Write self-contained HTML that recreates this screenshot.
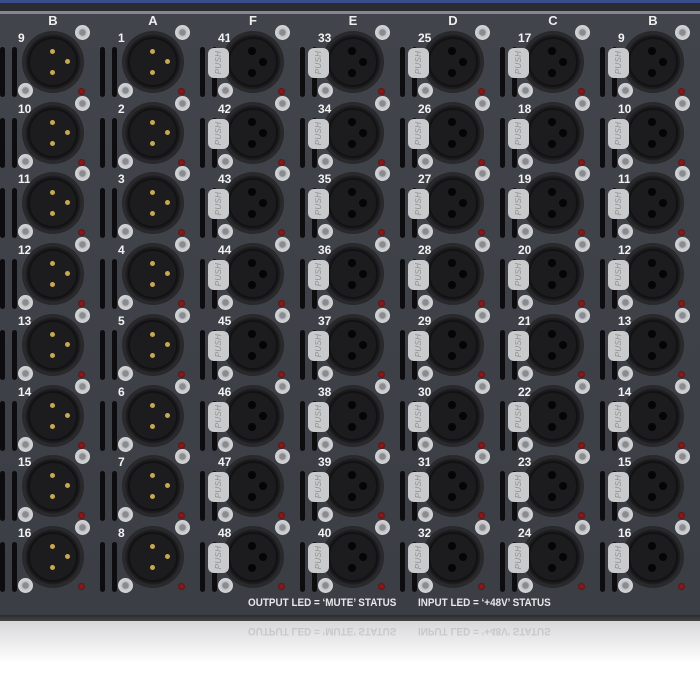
<!DOCTYPE html>
<html><head><meta charset="utf-8"><style>
*{margin:0;padding:0;box-sizing:border-box}
body{width:700px;height:700px;overflow:hidden;background:#fff;font-family:"Liberation Sans",sans-serif;position:relative}
.top1{position:absolute;left:0;top:0;width:700px;height:3px;background:#3b4e8c}
.top2{position:absolute;left:0;top:3px;width:700px;height:8px;background:#2a2c31}
.top3{position:absolute;left:0;top:11px;width:700px;height:3px;background:#85878c}
.panel{position:absolute;left:0;top:14px;width:700px;height:603px;background:linear-gradient(#41444b,#3b3e45)}
.lip{position:absolute;left:0;top:615px;width:700px;height:6px;background:linear-gradient(#2a2b2f,#444)}
.refl{position:absolute;left:0;top:621px;width:700px;height:60px;background:linear-gradient(#d8d8da,#fff 70%)}
.L{position:absolute;top:13px;width:20px;margin-left:-10px;text-align:center;color:#eee;font-weight:bold;font-size:13px}
.c{position:absolute;width:100px;height:71px}
.c i,.c span{position:absolute;display:block}
.sl{left:-3px;top:20px;width:5px;height:50px;background:#0d0d0f;border-radius:3px}
.sl.r{left:9px}
.n{left:15px;top:4px;color:#f2f2f2;font-weight:bold;font-size:12px}
.o{left:19px;top:4px;width:62px;height:62px;border-radius:50%;background:radial-gradient(circle,#1b1b1d 60%,#2a2a2d 64%,#232325 90%,#505258 100%)}
.in{left:6px;top:6px;width:50px;height:50px;border-radius:50%;background:#1c1c1e;border:2px solid #121214}
.pn{width:5px;height:5px;border-radius:50%;background:#c8a850}
.pn.a{left:20px;top:10px}.pn.b{left:35px;top:20px}.pn.d{left:20px;top:31px}
.h{width:8px;height:8px;border-radius:50%;background:#050505}
.h.a{left:18px;top:8px}.h.b{left:29px;top:19px}.h.d{left:18px;top:30px}
.sc{width:15px;height:15px;border-radius:50%;background:radial-gradient(circle,#8a8b8f 25%,#c4c5c8 38%,#d8d9db 72%,#7a7a7e 100%)}
.sc.t{left:72px;top:-2px}.sc.bl{left:15px;top:56px}
.led{left:75px;top:61px;width:7px;height:7px;border-radius:50%;background:radial-gradient(circle,#8a1a1a 30%,#3a0c0c 100%)}
.tab{left:5px;top:21px;width:21px;height:30px;border-radius:6px;background:#c9cacc;z-index:2}
.tab span{left:-5px;top:10px;width:31px;font-size:8px;color:#8e8f92;text-align:center;transform:rotate(-90deg);letter-spacing:.3px}
.bt{position:absolute;top:597px;color:#e8e8ea;font-weight:bold;font-size:11px;transform:scaleX(.9);transform-origin:left}
.rt{position:absolute;top:625px;color:#aaa;font-weight:bold;font-size:11px;transform:scale(.9,-1);transform-origin:left center;opacity:.45}
</style></head><body>
<div class="top1"></div><div class="top2"></div><div class="top3"></div>
<div class="panel"></div>
<div class="L" style="left:53px">B</div><div class="L" style="left:153px">A</div><div class="L" style="left:253px">F</div><div class="L" style="left:353px">E</div><div class="L" style="left:453px">D</div><div class="L" style="left:553px">C</div><div class="L" style="left:653px">B</div>

<div class="c" style="left:3px;top:27px"><i class="sl"></i><i class="sl r"></i><span class="n">9</span><i class="o"><i class="in"><i class="pn a"></i><i class="pn b"></i><i class="pn d"></i></i></i><i class="sc t"></i><i class="sc bl"></i><i class="led"></i></div>
<div class="c" style="left:3px;top:98px"><i class="sl"></i><i class="sl r"></i><span class="n">10</span><i class="o"><i class="in"><i class="pn a"></i><i class="pn b"></i><i class="pn d"></i></i></i><i class="sc t"></i><i class="sc bl"></i><i class="led"></i></div>
<div class="c" style="left:3px;top:168px"><i class="sl"></i><i class="sl r"></i><span class="n">11</span><i class="o"><i class="in"><i class="pn a"></i><i class="pn b"></i><i class="pn d"></i></i></i><i class="sc t"></i><i class="sc bl"></i><i class="led"></i></div>
<div class="c" style="left:3px;top:239px"><i class="sl"></i><i class="sl r"></i><span class="n">12</span><i class="o"><i class="in"><i class="pn a"></i><i class="pn b"></i><i class="pn d"></i></i></i><i class="sc t"></i><i class="sc bl"></i><i class="led"></i></div>
<div class="c" style="left:3px;top:310px"><i class="sl"></i><i class="sl r"></i><span class="n">13</span><i class="o"><i class="in"><i class="pn a"></i><i class="pn b"></i><i class="pn d"></i></i></i><i class="sc t"></i><i class="sc bl"></i><i class="led"></i></div>
<div class="c" style="left:3px;top:381px"><i class="sl"></i><i class="sl r"></i><span class="n">14</span><i class="o"><i class="in"><i class="pn a"></i><i class="pn b"></i><i class="pn d"></i></i></i><i class="sc t"></i><i class="sc bl"></i><i class="led"></i></div>
<div class="c" style="left:3px;top:451px"><i class="sl"></i><i class="sl r"></i><span class="n">15</span><i class="o"><i class="in"><i class="pn a"></i><i class="pn b"></i><i class="pn d"></i></i></i><i class="sc t"></i><i class="sc bl"></i><i class="led"></i></div>
<div class="c" style="left:3px;top:522px"><i class="sl"></i><i class="sl r"></i><span class="n">16</span><i class="o"><i class="in"><i class="pn a"></i><i class="pn b"></i><i class="pn d"></i></i></i><i class="sc t"></i><i class="sc bl"></i><i class="led"></i></div>
<div class="c" style="left:103px;top:27px"><i class="sl"></i><i class="sl r"></i><span class="n">1</span><i class="o"><i class="in"><i class="pn a"></i><i class="pn b"></i><i class="pn d"></i></i></i><i class="sc t"></i><i class="sc bl"></i><i class="led"></i></div>
<div class="c" style="left:103px;top:98px"><i class="sl"></i><i class="sl r"></i><span class="n">2</span><i class="o"><i class="in"><i class="pn a"></i><i class="pn b"></i><i class="pn d"></i></i></i><i class="sc t"></i><i class="sc bl"></i><i class="led"></i></div>
<div class="c" style="left:103px;top:168px"><i class="sl"></i><i class="sl r"></i><span class="n">3</span><i class="o"><i class="in"><i class="pn a"></i><i class="pn b"></i><i class="pn d"></i></i></i><i class="sc t"></i><i class="sc bl"></i><i class="led"></i></div>
<div class="c" style="left:103px;top:239px"><i class="sl"></i><i class="sl r"></i><span class="n">4</span><i class="o"><i class="in"><i class="pn a"></i><i class="pn b"></i><i class="pn d"></i></i></i><i class="sc t"></i><i class="sc bl"></i><i class="led"></i></div>
<div class="c" style="left:103px;top:310px"><i class="sl"></i><i class="sl r"></i><span class="n">5</span><i class="o"><i class="in"><i class="pn a"></i><i class="pn b"></i><i class="pn d"></i></i></i><i class="sc t"></i><i class="sc bl"></i><i class="led"></i></div>
<div class="c" style="left:103px;top:381px"><i class="sl"></i><i class="sl r"></i><span class="n">6</span><i class="o"><i class="in"><i class="pn a"></i><i class="pn b"></i><i class="pn d"></i></i></i><i class="sc t"></i><i class="sc bl"></i><i class="led"></i></div>
<div class="c" style="left:103px;top:451px"><i class="sl"></i><i class="sl r"></i><span class="n">7</span><i class="o"><i class="in"><i class="pn a"></i><i class="pn b"></i><i class="pn d"></i></i></i><i class="sc t"></i><i class="sc bl"></i><i class="led"></i></div>
<div class="c" style="left:103px;top:522px"><i class="sl"></i><i class="sl r"></i><span class="n">8</span><i class="o"><i class="in"><i class="pn a"></i><i class="pn b"></i><i class="pn d"></i></i></i><i class="sc t"></i><i class="sc bl"></i><i class="led"></i></div>
<div class="c" style="left:203px;top:27px"><i class="sl"></i><i class="sl r"></i><span class="n">41</span><i class="o"><i class="in"><i class="h a"></i><i class="h b"></i><i class="h d"></i></i></i><i class="tab"><span>PUSH</span></i><i class="sc t"></i><i class="sc bl"></i><i class="led"></i></div>
<div class="c" style="left:203px;top:98px"><i class="sl"></i><i class="sl r"></i><span class="n">42</span><i class="o"><i class="in"><i class="h a"></i><i class="h b"></i><i class="h d"></i></i></i><i class="tab"><span>PUSH</span></i><i class="sc t"></i><i class="sc bl"></i><i class="led"></i></div>
<div class="c" style="left:203px;top:168px"><i class="sl"></i><i class="sl r"></i><span class="n">43</span><i class="o"><i class="in"><i class="h a"></i><i class="h b"></i><i class="h d"></i></i></i><i class="tab"><span>PUSH</span></i><i class="sc t"></i><i class="sc bl"></i><i class="led"></i></div>
<div class="c" style="left:203px;top:239px"><i class="sl"></i><i class="sl r"></i><span class="n">44</span><i class="o"><i class="in"><i class="h a"></i><i class="h b"></i><i class="h d"></i></i></i><i class="tab"><span>PUSH</span></i><i class="sc t"></i><i class="sc bl"></i><i class="led"></i></div>
<div class="c" style="left:203px;top:310px"><i class="sl"></i><i class="sl r"></i><span class="n">45</span><i class="o"><i class="in"><i class="h a"></i><i class="h b"></i><i class="h d"></i></i></i><i class="tab"><span>PUSH</span></i><i class="sc t"></i><i class="sc bl"></i><i class="led"></i></div>
<div class="c" style="left:203px;top:381px"><i class="sl"></i><i class="sl r"></i><span class="n">46</span><i class="o"><i class="in"><i class="h a"></i><i class="h b"></i><i class="h d"></i></i></i><i class="tab"><span>PUSH</span></i><i class="sc t"></i><i class="sc bl"></i><i class="led"></i></div>
<div class="c" style="left:203px;top:451px"><i class="sl"></i><i class="sl r"></i><span class="n">47</span><i class="o"><i class="in"><i class="h a"></i><i class="h b"></i><i class="h d"></i></i></i><i class="tab"><span>PUSH</span></i><i class="sc t"></i><i class="sc bl"></i><i class="led"></i></div>
<div class="c" style="left:203px;top:522px"><i class="sl"></i><i class="sl r"></i><span class="n">48</span><i class="o"><i class="in"><i class="h a"></i><i class="h b"></i><i class="h d"></i></i></i><i class="tab"><span>PUSH</span></i><i class="sc t"></i><i class="sc bl"></i><i class="led"></i></div>
<div class="c" style="left:303px;top:27px"><i class="sl"></i><i class="sl r"></i><span class="n">33</span><i class="o"><i class="in"><i class="h a"></i><i class="h b"></i><i class="h d"></i></i></i><i class="tab"><span>PUSH</span></i><i class="sc t"></i><i class="sc bl"></i><i class="led"></i></div>
<div class="c" style="left:303px;top:98px"><i class="sl"></i><i class="sl r"></i><span class="n">34</span><i class="o"><i class="in"><i class="h a"></i><i class="h b"></i><i class="h d"></i></i></i><i class="tab"><span>PUSH</span></i><i class="sc t"></i><i class="sc bl"></i><i class="led"></i></div>
<div class="c" style="left:303px;top:168px"><i class="sl"></i><i class="sl r"></i><span class="n">35</span><i class="o"><i class="in"><i class="h a"></i><i class="h b"></i><i class="h d"></i></i></i><i class="tab"><span>PUSH</span></i><i class="sc t"></i><i class="sc bl"></i><i class="led"></i></div>
<div class="c" style="left:303px;top:239px"><i class="sl"></i><i class="sl r"></i><span class="n">36</span><i class="o"><i class="in"><i class="h a"></i><i class="h b"></i><i class="h d"></i></i></i><i class="tab"><span>PUSH</span></i><i class="sc t"></i><i class="sc bl"></i><i class="led"></i></div>
<div class="c" style="left:303px;top:310px"><i class="sl"></i><i class="sl r"></i><span class="n">37</span><i class="o"><i class="in"><i class="h a"></i><i class="h b"></i><i class="h d"></i></i></i><i class="tab"><span>PUSH</span></i><i class="sc t"></i><i class="sc bl"></i><i class="led"></i></div>
<div class="c" style="left:303px;top:381px"><i class="sl"></i><i class="sl r"></i><span class="n">38</span><i class="o"><i class="in"><i class="h a"></i><i class="h b"></i><i class="h d"></i></i></i><i class="tab"><span>PUSH</span></i><i class="sc t"></i><i class="sc bl"></i><i class="led"></i></div>
<div class="c" style="left:303px;top:451px"><i class="sl"></i><i class="sl r"></i><span class="n">39</span><i class="o"><i class="in"><i class="h a"></i><i class="h b"></i><i class="h d"></i></i></i><i class="tab"><span>PUSH</span></i><i class="sc t"></i><i class="sc bl"></i><i class="led"></i></div>
<div class="c" style="left:303px;top:522px"><i class="sl"></i><i class="sl r"></i><span class="n">40</span><i class="o"><i class="in"><i class="h a"></i><i class="h b"></i><i class="h d"></i></i></i><i class="tab"><span>PUSH</span></i><i class="sc t"></i><i class="sc bl"></i><i class="led"></i></div>
<div class="c" style="left:403px;top:27px"><i class="sl"></i><i class="sl r"></i><span class="n">25</span><i class="o"><i class="in"><i class="h a"></i><i class="h b"></i><i class="h d"></i></i></i><i class="tab"><span>PUSH</span></i><i class="sc t"></i><i class="sc bl"></i><i class="led"></i></div>
<div class="c" style="left:403px;top:98px"><i class="sl"></i><i class="sl r"></i><span class="n">26</span><i class="o"><i class="in"><i class="h a"></i><i class="h b"></i><i class="h d"></i></i></i><i class="tab"><span>PUSH</span></i><i class="sc t"></i><i class="sc bl"></i><i class="led"></i></div>
<div class="c" style="left:403px;top:168px"><i class="sl"></i><i class="sl r"></i><span class="n">27</span><i class="o"><i class="in"><i class="h a"></i><i class="h b"></i><i class="h d"></i></i></i><i class="tab"><span>PUSH</span></i><i class="sc t"></i><i class="sc bl"></i><i class="led"></i></div>
<div class="c" style="left:403px;top:239px"><i class="sl"></i><i class="sl r"></i><span class="n">28</span><i class="o"><i class="in"><i class="h a"></i><i class="h b"></i><i class="h d"></i></i></i><i class="tab"><span>PUSH</span></i><i class="sc t"></i><i class="sc bl"></i><i class="led"></i></div>
<div class="c" style="left:403px;top:310px"><i class="sl"></i><i class="sl r"></i><span class="n">29</span><i class="o"><i class="in"><i class="h a"></i><i class="h b"></i><i class="h d"></i></i></i><i class="tab"><span>PUSH</span></i><i class="sc t"></i><i class="sc bl"></i><i class="led"></i></div>
<div class="c" style="left:403px;top:381px"><i class="sl"></i><i class="sl r"></i><span class="n">30</span><i class="o"><i class="in"><i class="h a"></i><i class="h b"></i><i class="h d"></i></i></i><i class="tab"><span>PUSH</span></i><i class="sc t"></i><i class="sc bl"></i><i class="led"></i></div>
<div class="c" style="left:403px;top:451px"><i class="sl"></i><i class="sl r"></i><span class="n">31</span><i class="o"><i class="in"><i class="h a"></i><i class="h b"></i><i class="h d"></i></i></i><i class="tab"><span>PUSH</span></i><i class="sc t"></i><i class="sc bl"></i><i class="led"></i></div>
<div class="c" style="left:403px;top:522px"><i class="sl"></i><i class="sl r"></i><span class="n">32</span><i class="o"><i class="in"><i class="h a"></i><i class="h b"></i><i class="h d"></i></i></i><i class="tab"><span>PUSH</span></i><i class="sc t"></i><i class="sc bl"></i><i class="led"></i></div>
<div class="c" style="left:503px;top:27px"><i class="sl"></i><i class="sl r"></i><span class="n">17</span><i class="o"><i class="in"><i class="h a"></i><i class="h b"></i><i class="h d"></i></i></i><i class="tab"><span>PUSH</span></i><i class="sc t"></i><i class="sc bl"></i><i class="led"></i></div>
<div class="c" style="left:503px;top:98px"><i class="sl"></i><i class="sl r"></i><span class="n">18</span><i class="o"><i class="in"><i class="h a"></i><i class="h b"></i><i class="h d"></i></i></i><i class="tab"><span>PUSH</span></i><i class="sc t"></i><i class="sc bl"></i><i class="led"></i></div>
<div class="c" style="left:503px;top:168px"><i class="sl"></i><i class="sl r"></i><span class="n">19</span><i class="o"><i class="in"><i class="h a"></i><i class="h b"></i><i class="h d"></i></i></i><i class="tab"><span>PUSH</span></i><i class="sc t"></i><i class="sc bl"></i><i class="led"></i></div>
<div class="c" style="left:503px;top:239px"><i class="sl"></i><i class="sl r"></i><span class="n">20</span><i class="o"><i class="in"><i class="h a"></i><i class="h b"></i><i class="h d"></i></i></i><i class="tab"><span>PUSH</span></i><i class="sc t"></i><i class="sc bl"></i><i class="led"></i></div>
<div class="c" style="left:503px;top:310px"><i class="sl"></i><i class="sl r"></i><span class="n">21</span><i class="o"><i class="in"><i class="h a"></i><i class="h b"></i><i class="h d"></i></i></i><i class="tab"><span>PUSH</span></i><i class="sc t"></i><i class="sc bl"></i><i class="led"></i></div>
<div class="c" style="left:503px;top:381px"><i class="sl"></i><i class="sl r"></i><span class="n">22</span><i class="o"><i class="in"><i class="h a"></i><i class="h b"></i><i class="h d"></i></i></i><i class="tab"><span>PUSH</span></i><i class="sc t"></i><i class="sc bl"></i><i class="led"></i></div>
<div class="c" style="left:503px;top:451px"><i class="sl"></i><i class="sl r"></i><span class="n">23</span><i class="o"><i class="in"><i class="h a"></i><i class="h b"></i><i class="h d"></i></i></i><i class="tab"><span>PUSH</span></i><i class="sc t"></i><i class="sc bl"></i><i class="led"></i></div>
<div class="c" style="left:503px;top:522px"><i class="sl"></i><i class="sl r"></i><span class="n">24</span><i class="o"><i class="in"><i class="h a"></i><i class="h b"></i><i class="h d"></i></i></i><i class="tab"><span>PUSH</span></i><i class="sc t"></i><i class="sc bl"></i><i class="led"></i></div>
<div class="c" style="left:603px;top:27px"><i class="sl"></i><i class="sl r"></i><span class="n">9</span><i class="o"><i class="in"><i class="h a"></i><i class="h b"></i><i class="h d"></i></i></i><i class="tab"><span>PUSH</span></i><i class="sc t"></i><i class="sc bl"></i><i class="led"></i></div>
<div class="c" style="left:603px;top:98px"><i class="sl"></i><i class="sl r"></i><span class="n">10</span><i class="o"><i class="in"><i class="h a"></i><i class="h b"></i><i class="h d"></i></i></i><i class="tab"><span>PUSH</span></i><i class="sc t"></i><i class="sc bl"></i><i class="led"></i></div>
<div class="c" style="left:603px;top:168px"><i class="sl"></i><i class="sl r"></i><span class="n">11</span><i class="o"><i class="in"><i class="h a"></i><i class="h b"></i><i class="h d"></i></i></i><i class="tab"><span>PUSH</span></i><i class="sc t"></i><i class="sc bl"></i><i class="led"></i></div>
<div class="c" style="left:603px;top:239px"><i class="sl"></i><i class="sl r"></i><span class="n">12</span><i class="o"><i class="in"><i class="h a"></i><i class="h b"></i><i class="h d"></i></i></i><i class="tab"><span>PUSH</span></i><i class="sc t"></i><i class="sc bl"></i><i class="led"></i></div>
<div class="c" style="left:603px;top:310px"><i class="sl"></i><i class="sl r"></i><span class="n">13</span><i class="o"><i class="in"><i class="h a"></i><i class="h b"></i><i class="h d"></i></i></i><i class="tab"><span>PUSH</span></i><i class="sc t"></i><i class="sc bl"></i><i class="led"></i></div>
<div class="c" style="left:603px;top:381px"><i class="sl"></i><i class="sl r"></i><span class="n">14</span><i class="o"><i class="in"><i class="h a"></i><i class="h b"></i><i class="h d"></i></i></i><i class="tab"><span>PUSH</span></i><i class="sc t"></i><i class="sc bl"></i><i class="led"></i></div>
<div class="c" style="left:603px;top:451px"><i class="sl"></i><i class="sl r"></i><span class="n">15</span><i class="o"><i class="in"><i class="h a"></i><i class="h b"></i><i class="h d"></i></i></i><i class="tab"><span>PUSH</span></i><i class="sc t"></i><i class="sc bl"></i><i class="led"></i></div>
<div class="c" style="left:603px;top:522px"><i class="sl"></i><i class="sl r"></i><span class="n">16</span><i class="o"><i class="in"><i class="h a"></i><i class="h b"></i><i class="h d"></i></i></i><i class="tab"><span>PUSH</span></i><i class="sc t"></i><i class="sc bl"></i><i class="led"></i></div>

<div class="bt" style="left:248px">OUTPUT LED = ‘MUTE’ STATUS</div>
<div class="bt" style="left:418px">INPUT LED = ‘+48V’ STATUS</div>
<div class="lip"></div>
<div class="refl"></div>
<div class="rt" style="left:248px">OUTPUT LED = ‘MUTE’ STATUS</div>
<div class="rt" style="left:418px">INPUT LED = ‘+48V’ STATUS</div>
</body></html>
